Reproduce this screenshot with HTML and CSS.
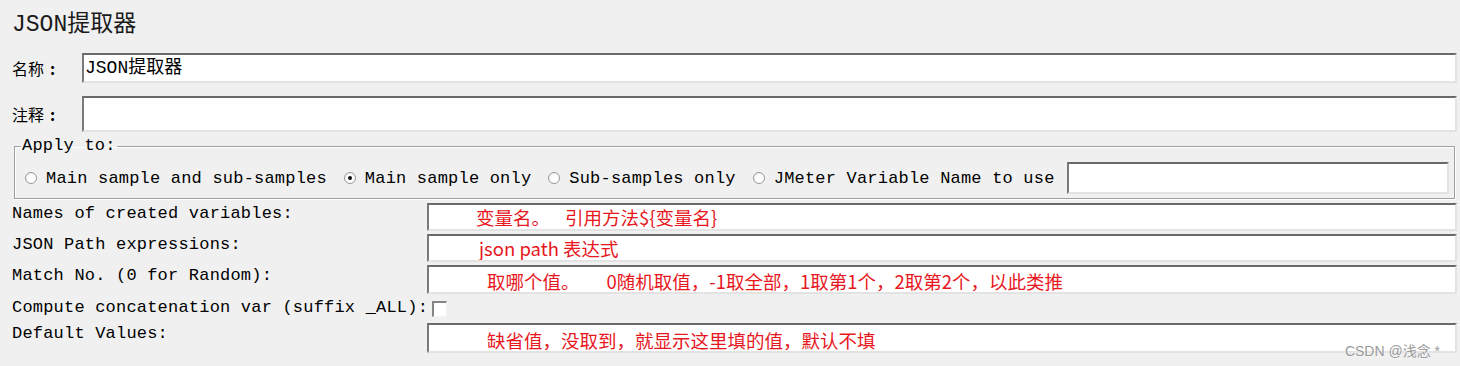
FILE: index.html
```html
<!DOCTYPE html>
<html lang="zh-CN">
<head>
<meta charset="utf-8">
<title>JSON提取器</title>
<link rel="stylesheet" href="styles.css">
</head>
<body>
<div class="page">
  <h1 class="title">JSON提取器</h1>

  <div class="field-row name-row">
    <span class="lbl">名称<span class="colon">:</span></span>
    <div class="box box-name">JSON提取器</div>
  </div>

  <div class="field-row comment-row">
    <span class="lbl">注释<span class="colon">:</span></span>
    <div class="box box-comment"></div>
  </div>

  <fieldset class="apply">
    <legend class="legend">Apply to:</legend>
    <div class="radios">
      <label class="opt"><span class="radio"></span>Main sample and sub-samples</label>
      <label class="opt"><span class="radio radio-on"></span>Main sample only</label>
      <label class="opt"><span class="radio"></span>Sub-samples only</label>
      <label class="opt opt-last"><span class="radio"></span>JMeter Variable Name to use</label>
      <div class="box box-var"></div>
    </div>
  </fieldset>

  <div class="grid">
    <span class="glbl">Names of created variables:</span>
    <div class="box gbox"><span class="note note-a">变量名。<span class="sp15"></span>引用方法${变量名}</span></div>

    <span class="glbl">JSON Path expressions:</span>
    <div class="box gbox"><span class="note note-b">json path 表达式</span></div>

    <span class="glbl">Match No. (0 for Random):</span>
    <div class="box gbox gbox-c"><span class="note note-c">取哪个值。<span class="sp27"></span>0随机取值，-1取全部，1取第1个，2取第2个，以此类推</span></div>

    <span class="glbl">Compute concatenation var (suffix _ALL):</span>
    <div class="chk-cell"><span class="chk"></span></div>

    <span class="glbl">Default Values:</span>
    <div class="box gbox gbox-d"><span class="note note-d">缺省值，没取到，就显示这里填的值，默认不填</span></div>
  </div>

  <div class="watermark">CSDN @浅念 *</div>
</div>
</body>
</html>
```

FILE: styles.css
```css
html, body {
  margin: 0;
  padding: 0;
  background: #f0f0f0;
}

body {
  width: 1460px;
  height: 366px;
  overflow: hidden;
  font-family: "Liberation Mono", "Noto Sans CJK SC", monospace;
  color: #000;
}

.page {
  position: relative;
  height: 366px;
  padding: 0 3px 0 12px;
  box-sizing: border-box;
}

.title {
  margin: 0;
  padding-top: 11px;
  font-weight: normal;
  font-size: 23px;
  line-height: 28px;
  color: #1a1a1a;
  font-family: "Liberation Mono", "Noto Sans CJK SC", monospace;
}

.field-row {
  display: grid;
  grid-template-columns: 70px 1fr;
  align-items: center;
}

.name-row {
  margin-top: 14px;
}

.comment-row {
  margin-top: 13px;
}

.lbl {
  font-family: "Noto Sans CJK SC", sans-serif;
  font-size: 16px;
  line-height: 20px;
  display: flex;
  align-items: center;
}

.colon {
  margin-left: 6px;
  font-weight: bold;
}

.box {
  background: #fff;
  border-style: solid;
  border-width: 2px;
  border-color: #6a6a6a #e3e3e3 #e3e3e3 #7a7a7a;
  box-sizing: border-box;
  overflow: hidden;
}

.box-name {
  height: 30px;
  padding-left: 1px;
  font-size: 18px;
  line-height: 26px;
  font-family: "Liberation Mono", "Noto Sans CJK SC", monospace;
}

.box-comment {
  height: 36px;
}

.apply {
  margin: 5px 2px 0 2px;
  padding: 7px 5px 4px 10px;
  border: 1px solid #a0a0a0;
  box-shadow: inset 1px 1px 0 #fff, 1px 1px 0 #fff;
}

.legend {
  margin-left: -4px;
  padding: 0 1px;
  font-size: 17px;
  line-height: 18px;
  letter-spacing: 0.2px;
}

.radios {
  display: flex;
  align-items: center;
  height: 32px;
  font-size: 17px;
  letter-spacing: 0.2px;
  white-space: nowrap;
}

.opt {
  display: flex;
  align-items: center;
  gap: 9px;
  margin-right: 17px;
}

.opt-last {
  margin-right: 12px;
}

.radio {
  position: relative;
  width: 12px;
  height: 12px;
  box-sizing: border-box;
  border-radius: 50%;
  border: 1px solid #9a9a9a;
  background: radial-gradient(circle at 60% 60%, #ffffff 40%, #e6e6e6 100%);
  flex: none;
}

.radio-on::after {
  content: "";
  position: absolute;
  left: 3px;
  top: 3px;
  width: 4px;
  height: 4px;
  border-radius: 50%;
  background: #111;
}

.box-var {
  flex: 1;
  height: 32px;
}

.grid {
  display: grid;
  grid-template-columns: 415px 1fr;
  grid-template-rows: 28px 28px 29px 23px 30px;
  row-gap: 3px;
  margin-top: 4px;
}

.glbl {
  align-self: start;
  font-size: 17px;
  line-height: 22px;
  letter-spacing: 0.2px;
  white-space: nowrap;
}

.gbox {
  height: 28px;
}

.gbox-c {
  height: 29px;
}

.gbox-d {
  height: 30px;
}

.note {
  display: block;
  font-family: "Noto Sans CJK SC", sans-serif;
  font-size: 18.5px;
  line-height: 22px;
  color: #e8161d;
  white-space: nowrap;
  letter-spacing: 0;
}

.note-a { padding-left: 47px; padding-top: 1px; }
.note-b { padding-left: 50px; padding-top: 1px; }
.note-c { padding-left: 58px; padding-top: 3px; }
.note-d { padding-left: 58px; padding-top: 4px; }

.sp15 { display: inline-block; width: 15px; }
.sp27 { display: inline-block; width: 27px; }

.chk-cell {
  display: flex;
  align-items: center;
  padding-left: 5px;
}

.chk {
  width: 15px;
  height: 16px;
  box-sizing: border-box;
  background: #fff;
  border-style: solid;
  border-width: 2px 1px 1px 2px;
  border-color: #858585 #f4f4f4 #f4f4f4 #858585;
}

.watermark {
  position: absolute;
  right: 20px;
  bottom: 7px;
  font-family: "Liberation Sans", "Noto Sans CJK SC", sans-serif;
  font-size: 14px;
  line-height: 16px;
  color: #9a9a9a;
  text-shadow: 0 0 2px #fff;
}
```
